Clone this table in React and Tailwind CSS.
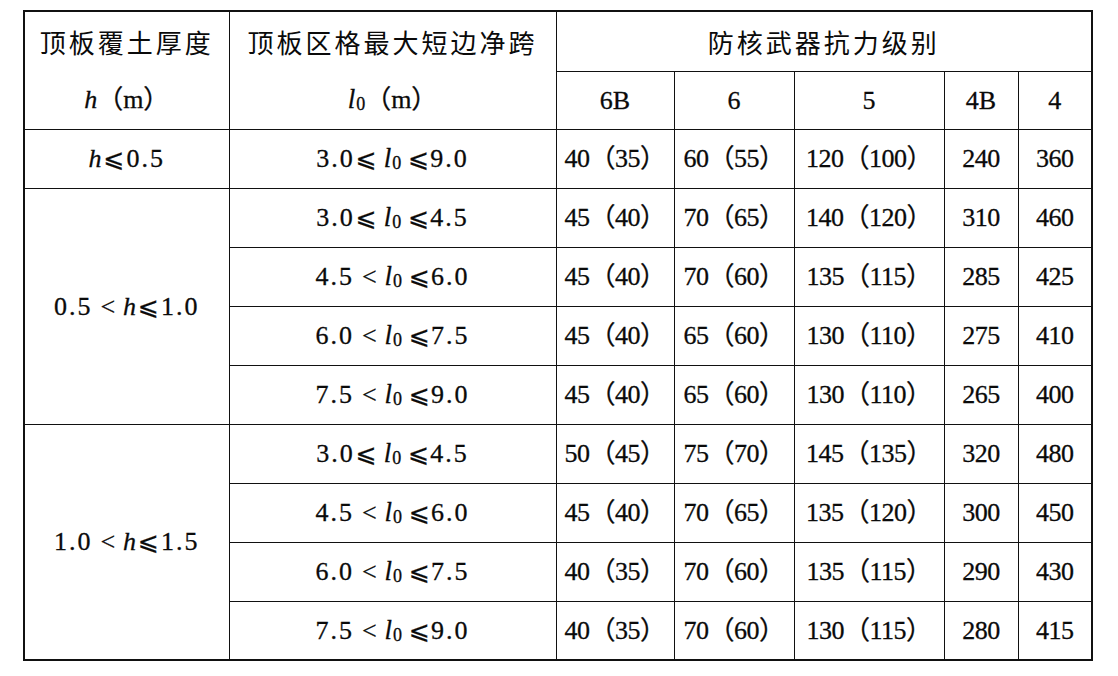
import React from 'react';

// 顶板覆土厚度 / 区格净跨 / 抗力级别 对照表
const GRADES = ['6B', '6', '5', '4B', '4'];

const groups = [
  {
    h: [null, '⩽', '0.5'],
    rows: [{ a: '3.0', op: '⩽', b: '9.0', v: ['40（35）', '60（55）', '120（100）', '240', '360'] }],
  },
  {
    h: ['0.5', '<', '1.0'],
    rows: [
      { a: '3.0', op: '⩽', b: '4.5', v: ['45（40）', '70（65）', '140（120）', '310', '460'] },
      { a: '4.5', op: '<', b: '6.0', v: ['45（40）', '70（60）', '135（115）', '285', '425'] },
      { a: '6.0', op: '<', b: '7.5', v: ['45（40）', '65（60）', '130（110）', '275', '410'] },
      { a: '7.5', op: '<', b: '9.0', v: ['45（40）', '65（60）', '130（110）', '265', '400'] },
    ],
  },
  {
    h: ['1.0', '<', '1.5'],
    rows: [
      { a: '3.0', op: '⩽', b: '4.5', v: ['50（45）', '75（70）', '145（135）', '320', '480'] },
      { a: '4.5', op: '<', b: '6.0', v: ['45（40）', '70（65）', '135（120）', '300', '450'] },
      { a: '6.0', op: '<', b: '7.5', v: ['40（35）', '70（60）', '135（115）', '290', '430'] },
      { a: '7.5', op: '<', b: '9.0', v: ['40（35）', '70（60）', '130（115）', '280', '415'] },
    ],
  },
];

function L0() {
  return (
    <span className="whitespace-nowrap tracking-normal">
      <i className="text-[27px]">l</i>
      <sub className="text-[18px] relative -bottom-[2px] ml-[1px]">0</sub>
    </span>
  );
}

// ⩽ sits tight against the number on its "tight" side
function Le({ side }) {
  return (
    <span
      className={
        "font-['DejaVu_Serif','DejaVu_Sans',serif] text-[25px] tracking-normal " +
        (side === 'left' ? 'ml-[1px] mr-[7px]' : 'ml-[7px] mr-[1px]')
      }
    >
      ⩽
    </span>
  );
}

function Lt() {
  return <span className="mx-[8px] tracking-normal">&lt;</span>;
}

function HRange({ h }) {
  const [a, , b] = h;
  return (
    <span className="tracking-[2px] text-[26px] whitespace-nowrap">
      {a}
      {a ? <Lt /> : null}
      <i className="tracking-normal">h</i>
      <span className="font-['DejaVu_Serif','DejaVu_Sans',serif] text-[25px] tracking-normal mx-[2px]">⩽</span>
      {b}
    </span>
  );
}

function LRange({ a, op, b }) {
  return (
    <span className="tracking-[2px] text-[26px] whitespace-nowrap">
      {a}
      {op === '<' ? <Lt /> : <Le side="left" />}
      <L0 />
      <Le side="right" />
      {b}
    </span>
  );
}

const cell = 'border border-[#111] text-center align-middle p-0';
const cjk = "text-[26px] tracking-[3px] font-['Noto_Sans_CJK_SC',sans-serif] [-webkit-text-stroke:0px]";

export default function App() {
  return (
    <div className="bg-white w-[1118px] h-[676px] overflow-hidden pl-[23px] pt-[10px] text-[#0a0a0a] [-webkit-text-stroke:0.3px_#0a0a0a] font-['Liberation_Serif','Noto_Sans_CJK_SC','DejaVu_Serif',serif]">
      <table className="table-fixed border-collapse border-2 border-[#111] w-[1068px]">
        <colgroup>
          <col className="w-[205px]" />
          <col className="w-[327px]" />
          <col className="w-[118px]" />
          <col className="w-[120px]" />
          <col className="w-[150px]" />
          <col className="w-[74px]" />
          <col className="w-[74px]" />
        </colgroup>
        <thead>
          <tr className="h-[60px]">
            <td rowSpan={2} className={cell}>
              <div className="flex flex-col">
                <div className={'h-[58px] flex items-center justify-center ' + cjk}>顶板覆土厚度</div>
                <div className="h-[58px] flex items-center justify-center text-[26px]">
                  <i>h</i>
                  <span>（m）</span>
                </div>
              </div>
            </td>
            <td rowSpan={2} className={cell}>
              <div className="flex flex-col">
                <div className={'h-[58px] flex items-center justify-center ' + cjk}>顶板区格最大短边净跨</div>
                <div className="h-[58px] flex items-center justify-center text-[26px]">
                  <L0 />
                  <span>（m）</span>
                </div>
              </div>
            </td>
            <td colSpan={5} className={cell + ' ' + cjk}>
              防核武器抗力级别
            </td>
          </tr>
          <tr className="h-[58px]">
            {GRADES.map((g) => (
              <td key={g} className={cell + ' text-[26px]'}>
                {g}
              </td>
            ))}
          </tr>
        </thead>
        <tbody>
          {groups.map((g, gi) =>
            g.rows.map((r, ri) => (
              <tr key={gi + '-' + ri} className="h-[59px]">
                {ri === 0 && (
                  <td rowSpan={g.rows.length} className={cell}>
                    <HRange h={g.h} />
                  </td>
                )}
                <td className={cell}>
                  <LRange a={r.a} op={r.op} b={r.b} />
                </td>
                {r.v.map((v, vi) => (
                  <td key={vi} className={cell + ' text-[26px] whitespace-nowrap tracking-[-0.5px]'}>
                    {v}
                  </td>
                ))}
              </tr>
            ))
          )}
        </tbody>
      </table>
    </div>
  );
}
